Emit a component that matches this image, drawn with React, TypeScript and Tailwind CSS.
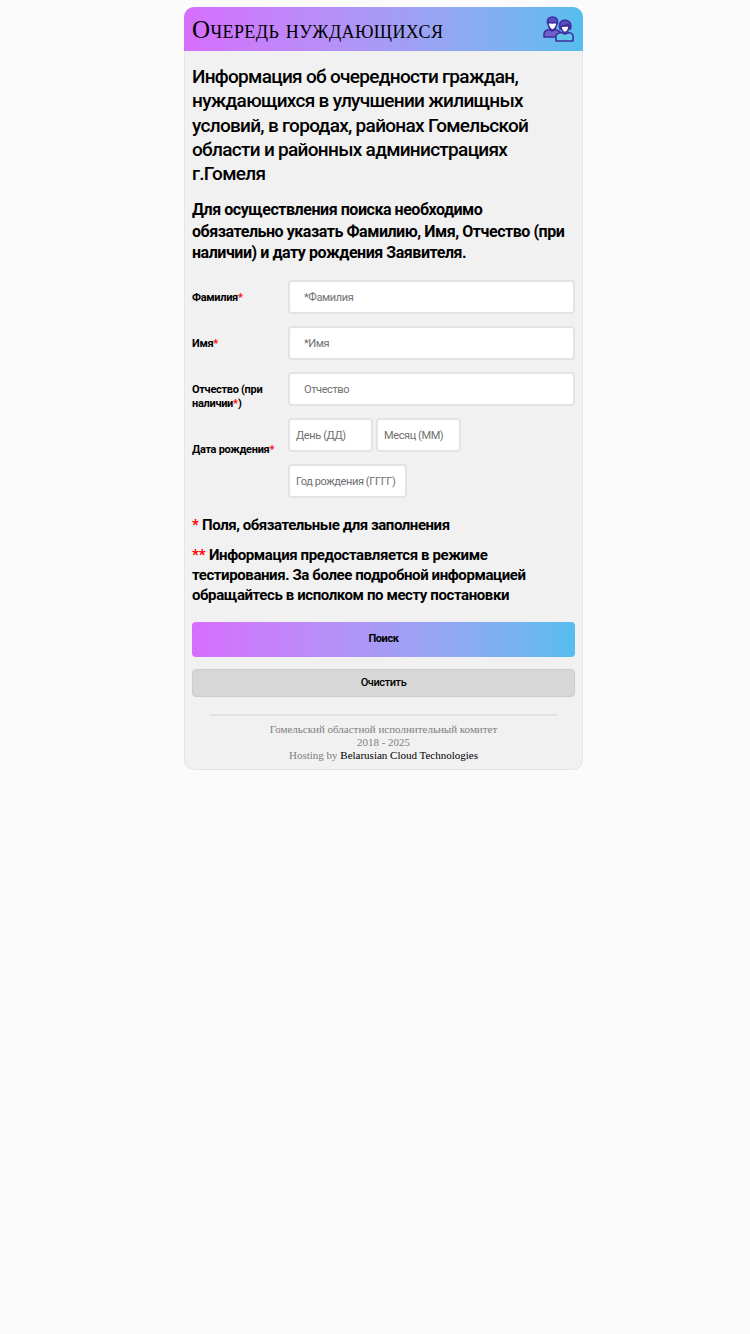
import React from 'react';

const Star = ({ children = '*' }: { children?: React.ReactNode }) => <span className="text-[#ff0000] tracking-normal">{children}</span>;

const PeopleIcon = () => (
    <svg width="31" height="26" viewBox="0 0 31 26" fill="none" stroke="#3d2f9e" strokeWidth="1.6" strokeLinejoin="round">
        {/* man */}
        <path d="M1 21v-3c0-3 3-4 5-4.500l3 1.500 3-1.500c2 .500 4 1 5 2.500v5z" fill="#6f63c9" />
        <path d="M5 6c0 4 2 8 4.500 8S14 10 14 6z" fill="#ffffff" />
        <path d="M4.500 7C3.500 3 6.500 1 9.500 1s6 2 5 6l-1.500-.500c-2 .500-5 .500-7 0z" fill="#5a4cc0" />
        {/* woman */}
        <path d="M13 25v-5c0-2 3-3 5-3.500l4 1.500 4-1.500c2 .500 4 1.500 4 3.500v5z" fill="#63c3e8" />
        <path d="M18 10c0 4 2 6.500 4 6.500s4-2.500 4-6.500z" fill="#ffffff" />
        <path d="M17 13c-2-6 1.500-9 5-9s7 3 5.500 9L26 12c.300-1.500 0-3-1-3.500-1.500 1-4 1.500-6.500 1.500-.500 1-.500 2-.500 3z" fill="#5a4cc0" />
    </svg>
);

const TextField = ({ placeholder }: { placeholder: string }) => (
    <input
        placeholder={placeholder}
        className="w-full h-[34px] bg-white border-2 border-[#e3e3e3] rounded-[4px] pl-[14px] pt-[1px] text-[11px] tracking-[-0.4px] placeholder:text-[#707070] outline-none"
    />
);

const DateField = ({ placeholder, width }: { placeholder: string; width: string }) => (
    <input
        placeholder={placeholder}
        className={`${width} h-[34px] bg-white border-2 border-[#e3e3e3] rounded-[4px] pl-[6px] pr-0 pt-[1px] text-[11px] tracking-[-0.4px] placeholder:text-[#707070] outline-none`}
    />
);

const labelClass = 'w-[96px] h-[34px] shrink-0 pt-[11px] text-[11px] leading-[14px] font-bold tracking-[-0.3px]';

const App: React.FC = () => {
    return (
        <div className="min-h-[1334px] bg-[#fbfbfb] pt-[7px] font-['Roboto','Open_Sans',sans-serif] text-black">
            <div className="w-[399px] ml-[184px] bg-[#f1f1f1] ring-1 ring-inset ring-[#e6e6e6] rounded-[10px] overflow-hidden">
                {/* Header */}
                <div className="flex items-center justify-between h-[44px] pl-[8px] pr-[9px] bg-gradient-to-r from-[#d66dfd] to-[#55bdee]">
                    <span className="font-['Liberation_Serif',serif] text-[25px] leading-none [font-variant:small-caps] tracking-[0.4px] whitespace-nowrap">
                        Очередь нуждающихся
                    </span>
                    <PeopleIcon />
                </div>

                <div className="px-[8px] pt-[14px]">
                    <h2 className="text-[19px] leading-[24.300px] font-medium tracking-[-0.7px]">
                        Информация об очередности граждан, нуждающихся в улучшении жилищных условий, в городах, районах Гомельской области и районных администрациях г.Гомеля
                    </h2>
                    <h3 className="mt-[13px] text-[16px] leading-[21.500px] font-bold tracking-[-0.45px]">
                        Для осуществления поиска необходимо обязательно указать Фамилию, Имя, Отчество (при наличии) и дату рождения Заявителя.
                    </h3>

                    {/* Form */}
                    <div className="mt-[16px] flex flex-col gap-[12px]">
                        <div className="flex">
                            <label className={labelClass}>Фамилия<Star /></label>
                            <TextField placeholder="*Фамилия" />
                        </div>
                        <div className="flex">
                            <label className={labelClass}>Имя<Star /></label>
                            <TextField placeholder="*Имя" />
                        </div>
                        <div className="flex">
                            <label className={labelClass}>Отчество (при наличии<Star />)</label>
                            <TextField placeholder="Отчество" />
                        </div>
                        <div className="flex">
                            <label className="w-[96px] shrink-0 pt-[25px] text-[11px] leading-[14px] font-bold tracking-[-0.3px]">Дата рождения<Star /></label>
                            <div className="flex flex-wrap gap-x-[3px] gap-y-[12px]">
                                <DateField placeholder="День (ДД)" width="w-[85px]" />
                                <DateField placeholder="Месяц (ММ)" width="w-[85px]" />
                                <div className="basis-full">
                                    <DateField placeholder="Год рождения (ГГГГ)" width="w-[119px]" />
                                </div>
                            </div>
                        </div>
                    </div>

                    {/* Notes */}
                    <p className="mt-[17px] text-[15px] leading-[20px] font-bold tracking-[-0.45px]">
                        <Star /> Поля, обязательные для заполнения
                    </p>
                    <p className="mt-[10px] text-[15px] leading-[20px] font-bold tracking-[-0.4px]">
                        <Star>**</Star> Информация предоставляется в режиме тестирования. За более подробной информацией обращайтесь в исполком по месту постановки
                    </p>

                    {/* Buttons */}
                    <button className="mt-[17px] w-full h-[35px] rounded-[4px] bg-gradient-to-r from-[#d66dfd] to-[#55bdee] text-[11px] font-bold tracking-[-0.4px]">
                        Поиск
                    </button>
                    <button className="mt-[12px] w-full h-[28px] rounded-[4px] bg-[#d7d7d7] border border-[#cdcdcd] text-[11px] font-medium tracking-[-0.4px]">
                        Очистить
                    </button>
                </div>

                {/* Footer */}
                <div className="mx-[26px] mt-[17px] border-t-2 border-[#e2e2e2] pt-[7px] pb-[8px] text-center font-['Liberation_Serif',serif] text-[11px] leading-[13px] text-[#808080]">
                    <div>Гомельский областной исполнительный комитет</div>
                    <div>2018 - 2025</div>
                    <div>Hosting by <span className="text-black">Belarusian Cloud Technologies</span></div>
                </div>
            </div>
        </div>
    );
};

export default App;
